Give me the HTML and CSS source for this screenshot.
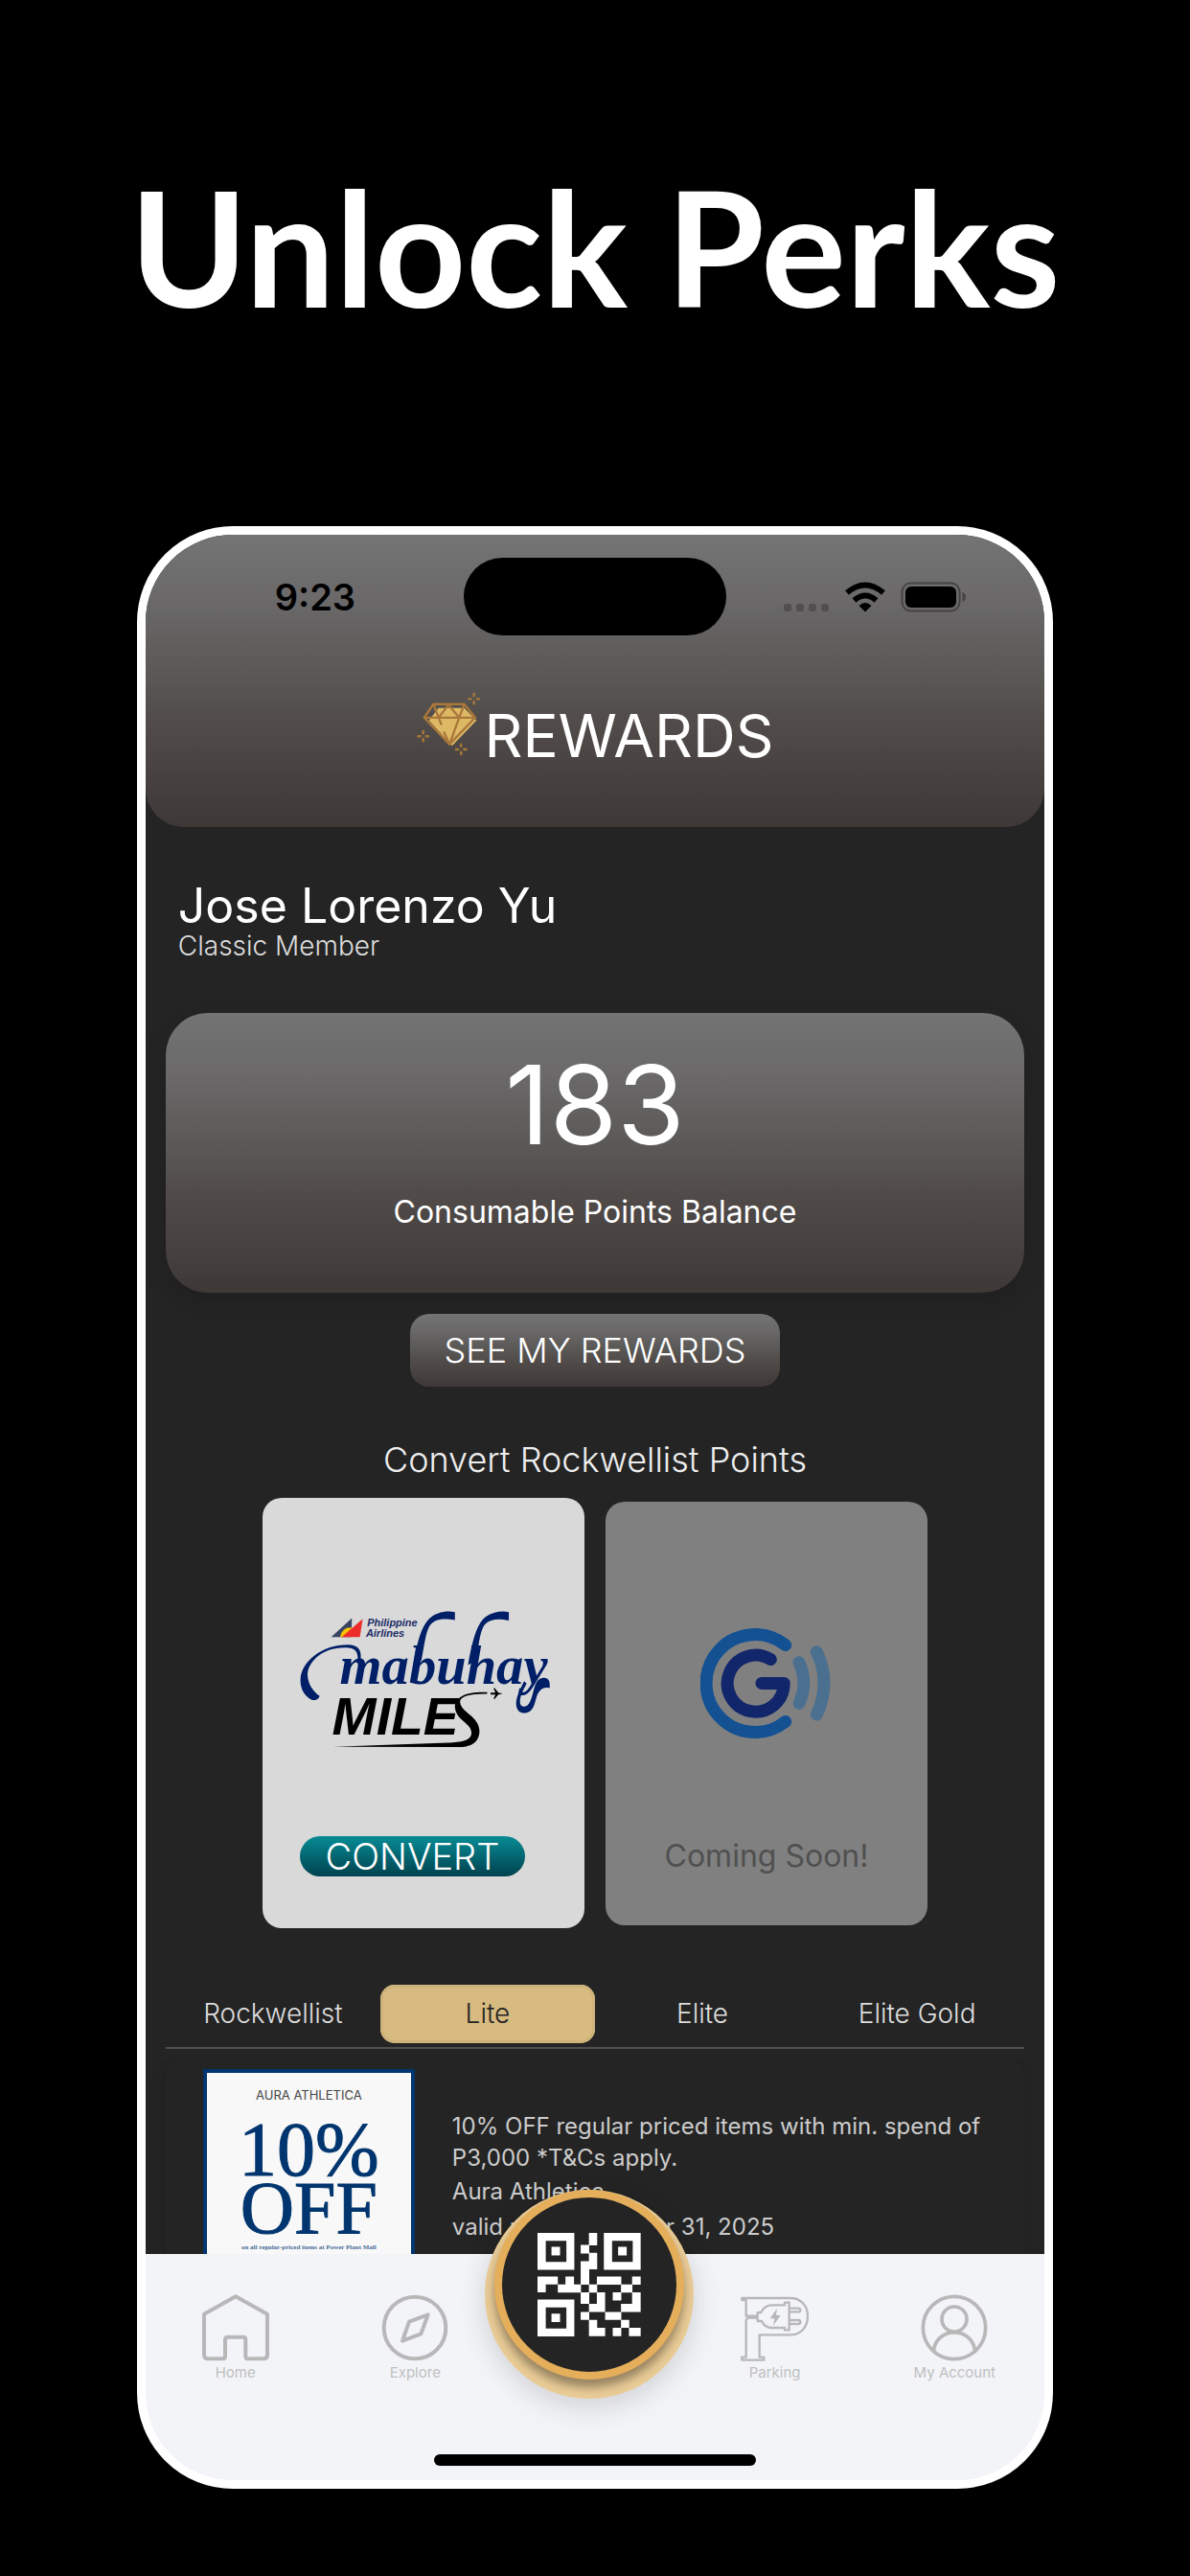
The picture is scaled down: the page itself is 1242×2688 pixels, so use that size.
FILE: index.html
```html
<!DOCTYPE html>
<html lang="en">
<head>
    <meta charset="UTF-8">
    <meta name="viewport" content="width=device-width, initial-scale=1">
    <title>Unlock Perks</title>
    <link rel="stylesheet" href="styles.css">
</head>
<body>
    <h1 class="headline">Unlock Perks</h1>

    <div class="phone">
        <header class="top">
            <div class="status">
                <span class="time">9:23</span>
                <span class="island"></span>
                <svg class="status-icons" viewBox="0 0 190 32" aria-hidden="true">
                    <g fill="#504e4f">
                        <rect x="0" y="23" width="8" height="8" rx="3"/>
                        <rect x="13" y="23" width="8" height="8" rx="3"/>
                        <rect x="26" y="23" width="8" height="8" rx="3"/>
                        <rect x="39" y="23" width="8" height="8" rx="3"/>
                    </g>
                    <g fill="none" stroke="#000" stroke-width="6">
                        <path d="M66 11.500Q85 -4.500 104 11.500"/>
                        <path d="M73.500 19.500Q85 9.500 96.500 19.500"/>
                    </g>
                    <path d="M78.500 25Q85 19 91.500 25L85 31.500Z"/>
                    <rect x="123.500" y="1.500" width="60" height="29" rx="9" fill="none" stroke="#454344" stroke-width="2"/>
                    <rect x="127" y="5" width="53" height="22" rx="6"/>
                    <path d="M186.500 11Q190 12.500 190 16T186.500 21Z" fill="#454344"/>
                </svg>
            </div>
            <div class="title">
                <svg class="diamond" viewBox="880 573 200 200" aria-hidden="true">
                    <path fill="#ddb865" d="M948 623H1028L1066 662L990 741L918 662Z"/>
                    <g fill="none" stroke="#a9783a" stroke-width="7" stroke-linejoin="round">
                        <path d="M932 611H1028L1062 653L982 736L903 653Z"/>
                        <path d="M903 653H1062M932 611L948 653L957 676M964 697L982 736L1012 653L1028 611M948 653L979 613L1012 653"/>
                    </g>
                    <g stroke="#a9783a" stroke-width="7" stroke-linecap="round">
                        <path d="M1058 579v7M1058 603v7M1042 595h7M1067 595h7"/>
                        <path d="M900 695v7M900 719v7M884 711h7M909 711h7"/>
                        <path d="M1018 736v7M1018 760v7M1002 752h7M1027 752h7"/>
                    </g>
                </svg>
                <h2>REWARDS</h2>
            </div>
        </header>

        <main>
            <section class="profile">
                <p class="name">Jose Lorenzo Yu</p>
                <p class="level">Classic Member</p>
            </section>

            <section class="balance">
                <p class="points">183</p>
                <p class="points-label">Consumable Points Balance</p>
            </section>

            <button class="see-rewards" type="button">SEE MY REWARDS</button>

            <h3 class="section-title">Convert Rockwellist Points</h3>
            <div class="partners">
                <article class="partner miles">
                    <svg class="miles-logo" viewBox="155 415 790 440" role="img" aria-label="Philippine Airlines Mabuhay Miles">
                        <path fill="#394465" d="M253 502L318 443L316 502Z"/>
                        <path fill="#f6c400" d="M281 502Q287 472 314 472L322 475L292 502Z"/>
                        <path fill="#ee2d2a" d="M286 502L352 445L343 502Z"/>
                        <g fill="#1d2b66" class="logo-sans" font-size="33">
                            <text x="366" y="468">Philippine</text>
                            <text x="362" y="501">Airlines</text>
                        </g>
                        <text class="logo-script" x="280" y="650" font-size="170" fill="#001f67">mabuhay</text>
                        <g fill="#001f67">
                            <path d="M336 580C340 545 325 535 300 535C225 533 180 580 179 620C180 650 197 673 217 687C212 700 203 702 190 698C165 684 155 660 157 630C162 580 222 524 310 526C340 528 350 545 345 575Z"/>
                            <path d="M510 590C522 520 535 470 560 445C580 425 615 418 641 424V449C600 442 575 446 560 470C548 495 545 530 536 575Z"/>
                            <path d="M682 590C694 520 707 470 730 445C750 425 785 418 810 424V450C770 442 745 446 730 470C718 495 715 530 708 575Z"/>
                            <path d="M858 640C842 672 833 690 833 712C834 732 845 740 860 740C885 738 889 718 897 690C903 672 915 656 938 662C940 640 935 630 918 630C898 632 893 650 887 672C880 700 874 720 857 720C838 718 842 690 866 648Z"/>
                        </g>
                        <text class="logo-sans" x="256" y="808" font-size="166">MILE</text>
                        <path d="M742 675C682 671 640 688 641 722C645 765 693 770 693 803C692 826 660 832 620 833L260 846L655 847C702 846 718 825 718 795C715 748 660 740 657 705C657 687 690 679 742 680Z"/>
                        <path d="M753 676H768L762 662H766L777 676L791 679L777 682L766 696H762L768 682H753Z"/>
                    </svg>
                    <button class="convert" type="button">CONVERT</button>
                </article>
                <article class="partner soon">
                    <svg class="wallet-logo" viewBox="0 0 137 115" fill="none" stroke-width="13" stroke-linecap="round" role="img" aria-label="GCash">
                        <path stroke="#135193" d="M88.700 17.500A51 51 0 1 0 88.700 97.500"/>
                        <path stroke="#12266b" stroke-linejoin="round" d="M73.300 32.600A29.500 29.500 0 1 0 87.200 57.400H64"/>
                        <g stroke="#4b708f">
                            <path d="M103 35.700A50 50 0 0 1 103 78.300"/>
                            <path d="M121.300 24.700A73 73 0 0 1 121.300 90"/>
                        </g>
                    </svg>
                    <p>Coming Soon!</p>
                </article>
            </div>

            <div class="tabs">
                <button type="button">Rockwellist</button>
                <button type="button" class="active">Lite</button>
                <button type="button">Elite</button>
                <button type="button">Elite Gold</button>
            </div>

            <div class="offers">
                <article class="offer">
                    <div class="poster">
                        <p class="brand">AURA ATHLETICA</p>
                        <p class="percent">10%</p>
                        <p class="off">OFF</p>
                        <p class="terms">on all regular-priced items at Power Plant Mall<br>exclusive to Rockwellist cardmembers</p>
                    </div>
                    <div class="details">
                        <p class="description">10% OFF regular priced items with min. spend of P3,000 *T&amp;Cs apply.</p>
                        <p>Aura Athletica</p>
                        <p>valid until December 31, 2025</p>
                    </div>
                </article>
            </div>
        </main>

        <nav class="nav">
            <div class="links">
                <a href="#home">
                    <svg viewBox="0 0 210 210" stroke-width="12"><path d="M6 62L105 7L204 62V190Q204 202 192 202H144Q136 202 136 194V142Q136 134 128 134H80Q72 134 72 142V194Q72 202 64 202H18Q6 202 6 190Z"/></svg>
                    Home
                </a>
                <a href="#explore">
                    <svg viewBox="0 0 210 210" stroke-width="12"><circle cx="105" cy="105" r="97"/><path d="M146 64L87 86L66 146L124 124Z"/></svg>
                    Explore
                </a>
                <a class="parking" href="#parking">
                    <svg viewBox="0 0 213 210" stroke-width="7">
                        <path d="M4 12H155C190 12 210 37 210 69S190 127 155 127H59V197H73V206H4V197H17V84Q17 74 27 74H53V84H66Q75 104 95 105H138V112H152V26H138V34H95Q75 35 64 57H53V68H17V18H4Z"/>
                        <path d="M152 44H180Q187 44 187 50T180 55H152M152 81H180Q187 81 187 87T180 93H152"/>
                        <path class="bolt" d="M114 44L92 76H106L102 98L125 66H111Z"/>
                    </svg>
                    Parking
                </a>
                <a href="#account">
                    <svg viewBox="0 0 210 210" stroke-width="11"><circle cx="105" cy="105" r="98"/><circle cx="105" cy="78" r="39"/><path d="M40 178C48 100 162 100 170 178"/></svg>
                    My Account
                </a>
            </div>
            <button class="scan" type="button" aria-label="Show my QR code">
                <span class="scan-face">
                    <svg viewBox="212 208 326 326" fill="#fff">
                        <path fill-rule="evenodd" d="M212 208h116v116h-116zM238 233v66h65v-66zM421 208h116v116h-116zM447 233v66h65v-66zM212 418h116v116h-116zM238 443v66h65v-66z"/>
                        <path d="M256 252h27v27h-27zM466 252h27v27h-27zM256 462h27v27h-27z"/>
                        <path d="M374 208h26v39h-26zM348 246h27v27h-27zM374 271h26v52h-26zM348 297h27v74h-27z"/>
                        <path d="M212 345h64v25h-38v25h-26zM300 345h27v26h-27zM276 370h73v26h-73zM399 345h77v26h-77zM510 345h27v26h-27zM475 370h36v26h-36zM374 370h26v26h-26z"/>
                        <path d="M348 395h27v36h-27zM399 395h26v62h-51v-26h25zM449 395h27v26h-27zM510 395h27v62h-62v-26h35z"/>
                        <path d="M348 457h27v25h-27zM425 457h51v25h-51zM475 482h26v25h-26zM374 482h26v25h25v26h-51zM449 507h27v26h-27zM500 507h37v26h-37z"/>
                    </svg>
                </span>
            </button>
            <div class="home-bar"></div>
        </nav>
    </div>
</body>
</html>
```
FILE: styles.css
```css
* {
    box-sizing: border-box;
}
body {
    margin: 0;
    background-color: #000;
    color: #fff;
    font-family: Inter, "Liberation Sans", sans-serif;
}
h1, h2, h3, p {
    margin: 0;
    font-weight: normal;
}
button {
    margin: 0;
    padding: 0;
    border: none;
    background: none;
    color: inherit;
    font-family: inherit;
    cursor: pointer;
}
svg {
    display: block;
}
.headline {
    padding: 157px 0 192px;
    font-family: Lato, sans-serif;
    font-size: 166px;
    font-weight: bold;
    line-height: 200px;
    text-align: center;
}
.phone {
    width: 77%;
    margin: 0 auto 80px;
    border: 9px solid #fff;
    border-radius: 100px;
    background: linear-gradient(#242424 50%, #f3f4f8 50%);
    overflow: hidden;
}
main {
    background-color: #242424;
}

/* header */
.top, .balance, .see-rewards {
    background: linear-gradient(#737473, #6c6a6b 20%, #585754 50%, #524d4b 62%, #3e3837);
}
.top {
    padding: 24px 0 49px;
    border-radius: 0 0 40px 40px;
}
.status {
    display: grid;
    grid-template-columns: 1fr 274px 1fr;
    align-items: center;
}
.time {
    padding-right: 113px;
    color: #000;
    font-size: 38px;
    font-weight: 600;
    text-align: right;
}
.island {
    height: 81px;
    border-radius: 41px;
    background-color: #000;
}
.status-icons {
    width: 190px;
    height: 32px;
    margin-left: 60px;
}
.title {
    display: flex;
    justify-content: center;
    gap: 4px;
    margin-top: 59px;
}
.diamond {
    width: 67px;
    height: 67px;
}
.title h2 {
    font-size: 62px;
    line-height: 92px;
}

/* member and points */
.profile {
    padding: 54px 34px 56px;
}
.name {
    font-size: 50px;
    line-height: 56px;
}
.level {
    font-size: 28px;
    font-weight: 300;
    line-height: 28px;
    color: #ddd;
}
.balance {
    margin: 0 21px 22px;
    padding: 36px 0 64px;
    border-radius: 44px;
    box-shadow: 0 8px 24px rgba(0,0,0,0.15);
    text-align: center;
}
.points {
    font-size: 114px;
    line-height: 120px;
}
.points-label {
    margin-top: 32px;
    font-size: 32px;
    line-height: 40px;
}
.see-rewards {
    display: block;
    margin: 0 auto 54px;
    padding: 0 36px;
    border-radius: 20px;
    font-size: 36px;
    font-weight: 300;
    line-height: 76px;
}

/* partner cards */
.section-title {
    margin-bottom: 18px;
    color: #eee;
    font-size: 36px;
    font-weight: 300;
    line-height: 44px;
    text-align: center;
}
.partners {
    display: flex;
    justify-content: center;
    align-items: center;
    gap: 22px;
    margin-bottom: 59px;
}
.partner {
    display: flex;
    flex-direction: column;
    justify-content: space-between;
    width: 336px;
    border-radius: 20px;
}
.miles {
    height: 449px;
    padding: 116px 34px 54px 39px;
    background-color: #d9d9d9;
    color: #000;
}
.miles-logo {
    width: 263px;
    height: 147px;
}
.logo-sans {
    font-family: "Liberation Sans", sans-serif;
    font-weight: bold;
    font-style: italic;
}
.logo-script {
    font-family: "Liberation Serif", serif;
    font-weight: bold;
    font-style: italic;
}
.convert {
    width: 235px;
    border-radius: 21px;
    background: linear-gradient(#078b94, #00424f);
    color: #fff;
    font-size: 38px;
    font-weight: 300;
    line-height: 42px;
}
.soon {
    align-items: center;
    height: 442px;
    padding: 132px 0 50px;
    background-color: #808080;
    color: #505050;
    font-size: 32px;
    font-weight: 300;
    line-height: 44px;
}
.wallet-logo {
    width: 137px;
    height: 115px;
}

/* tabs */
.tabs {
    display: grid;
    grid-template-columns: repeat(4, 1fr);
    margin: 0 21px 10px;
    padding-bottom: 4px;
    border-bottom: 2px solid #505050;
}
.tabs button {
    border-radius: 15px;
    color: #ddd;
    font-size: 28px;
    font-weight: 300;
    line-height: 61px;
}
.tabs .active {
    background-color: #d7bb80;
    box-shadow: inset 0 0 0 3px #ceb37b;
    color: #242424;
}

/* offers, cut off by the bottom bar */
.offers {
    height: 204px;
    padding: 0 21px;
    overflow: hidden;
}
.offer {
    display: flex;
    gap: 39px;
    padding: 11px 10px 30px 39px;
    border-radius: 18px;
    box-shadow: 0 0 16px rgba(0,0,0,0.15);
}
.poster {
    flex: none;
    width: 221px;
    padding: 15px 0 30px;
    border: 4px solid #00356f;
    background-color: #f8f8f8;
    color: #00356f;
    font-family: "Liberation Serif", serif;
    text-align: center;
}
.brand {
    margin-bottom: 15px;
    color: #444;
    font-family: Inter, sans-serif;
    font-size: 13px;
    line-height: 16px;
}
.percent, .off {
    -webkit-text-stroke: 1px #00356f;
}
.percent {
    font-size: 80px;
    line-height: 68px;
}
.off {
    margin-bottom: 9px;
    font-size: 78px;
    line-height: 54px;
}
.terms {
    color: #4a6c9a;
    font-size: 7px;
    font-weight: bold;
    line-height: 10px;
}
.details {
    padding-top: 43px;
    color: #ccc;
    font-size: 24px;
    font-weight: 300;
    line-height: 37px;
}
.description {
    line-height: 33px;
}

/* bottom bar */
.nav {
    position: relative;
    padding: 42px 0 15px;
    background-color: #f3f4f8;
}
.links {
    display: grid;
    grid-template-columns: repeat(5, 1fr);
    margin-bottom: 77px;
}
.links a {
    display: flex;
    flex-direction: column;
    align-items: center;
    gap: 4px;
    color: #c0c0c0;
    font-size: 15px;
    line-height: 16px;
    text-decoration: none;
}
.links svg {
    height: 70px;
    fill: none;
    stroke: #b8b8b8;
    stroke-linejoin: round;
}
.links .bolt {
    fill: #b8b8b8;
    stroke: none;
}
.links .parking {
    grid-column: 4;
}
.scan {
    position: absolute;
    top: -67px;
    left: calc(50% - 115px);
    width: 218px;
    height: 218px;
    border-radius: 50%;
    background-color: #e9cb96;
    box-shadow: 0 8px 30px rgba(0,0,0,0.15);
}
.scan-face {
    display: flex;
    align-items: center;
    justify-content: center;
    width: 198px;
    height: 198px;
    margin: 0 auto 20px;
    border: 8px solid #e5ae5b;
    border-radius: 50%;
    background-color: #242424;
    box-shadow: 0 8px 10px rgba(0,0,0,0.35);
}
.scan-face svg {
    width: 108px;
    height: 108px;
}
.home-bar {
    width: 336px;
    height: 12px;
    margin: 0 auto;
    border-radius: 6px;
    background-color: #000;
}
```
